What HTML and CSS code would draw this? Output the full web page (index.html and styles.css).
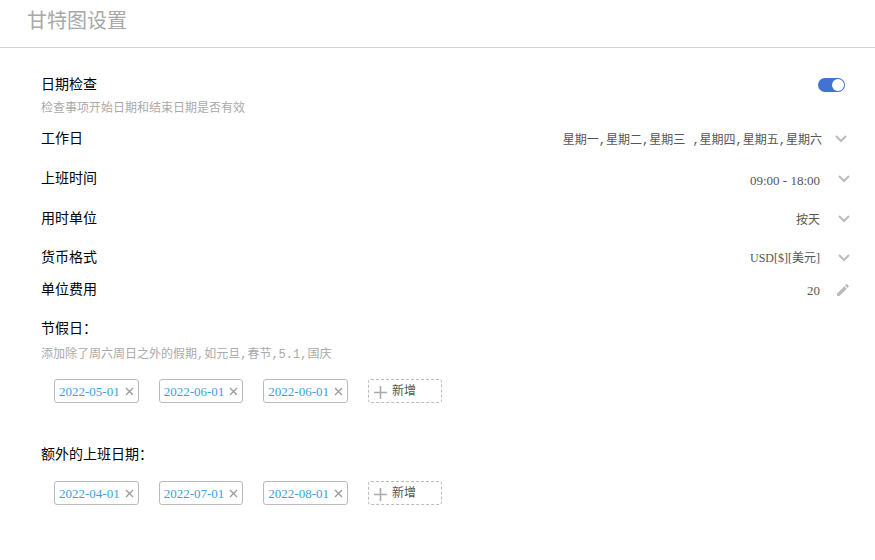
FILE: index.html
```html
<!DOCTYPE html>
<html lang="zh-CN">
<head>
    <meta charset="UTF-8">
    <title>甘特图设置</title>
    <link rel="stylesheet" href="styles.css">
</head>
<body>
<svg class="sprite" width="0" height="0">
    <symbol id="arrow" viewBox="0 0 12 8"><path d="M1 1l5 5 5-5" fill="none" stroke="#bbb" stroke-width="2"/></symbol>
    <symbol id="close" viewBox="0 0 9 9"><path d="M1 1l7 7M8 1l-7 7" fill="none" stroke="#999" stroke-width="1.3"/></symbol>
    <symbol id="plus" viewBox="0 0 13 13"><path d="M6.5 0v13M0 6.5h13" fill="none" stroke="#aaa" stroke-width="1.6"/></symbol>
    <symbol id="pen" viewBox="0 0 12 12"><path d="M0 12V9.5L7.3 2.2l2.5 2.5L2.5 12zM8 1.5L9.2.3q.4-.4.8 0l1.7 1.7q.4.4 0 .8L10.5 4z" fill="#bbb"/></symbol>
</svg>
<header class="header">
    <h1>甘特图设置</h1>
</header>
<main class="settings">
    <div class="row check">
        <label for="dateCheck">日期检查</label>
        <input class="switch" type="checkbox" id="dateCheck" checked>
    </div>
    <p class="hint">检查事项开始日期和结束日期是否有效</p>
    <div class="row">
        <label for="workday">工作日</label>
        <div class="pick days">
            <select id="workday"><option>星期一,星期二,星期三 ,星期四,星期五,星期六</option></select>
            <svg class="arrow"><use href="#arrow"/></svg>
        </div>
    </div>
    <div class="row">
        <label for="worktime">上班时间</label>
        <div class="pick">
            <select id="worktime" class="num"><option>09:00 - 18:00</option></select>
            <svg class="arrow"><use href="#arrow"/></svg>
        </div>
    </div>
    <div class="row">
        <label for="unit">用时单位</label>
        <div class="pick">
            <select id="unit"><option>按天</option></select>
            <svg class="arrow"><use href="#arrow"/></svg>
        </div>
    </div>
    <div class="row currency">
        <label for="currency">货币格式</label>
        <div class="pick">
            <select id="currency" class="money"><option>USD[$][美元]</option></select>
            <svg class="arrow"><use href="#arrow"/></svg>
        </div>
    </div>
    <div class="row cost">
        <label for="cost">单位费用</label>
        <div class="edit">
            <input id="cost" class="num" type="text" value="20">
            <button type="button" aria-label="编辑"><svg class="pen"><use href="#pen"/></svg></button>
        </div>
    </div>
    <section class="holiday">
        <h2>节假日：</h2>
        <p class="hint">添加除了周六周日之外的假期,如元旦,春节,5.1,国庆</p>
        <div class="dates">
            <span class="date num">2022-05-01<button type="button" aria-label="删除"><svg class="close"><use href="#close"/></svg></button></span>
            <span class="date num">2022-06-01<button type="button" aria-label="删除"><svg class="close"><use href="#close"/></svg></button></span>
            <span class="date num">2022-06-01<button type="button" aria-label="删除"><svg class="close"><use href="#close"/></svg></button></span>
            <button type="button" class="add"><svg class="plus"><use href="#plus"/></svg>新增</button>
        </div>
    </section>
    <section class="extra">
        <h2>额外的上班日期：</h2>
        <div class="dates">
            <span class="date num">2022-04-01<button type="button" aria-label="删除"><svg class="close"><use href="#close"/></svg></button></span>
            <span class="date num">2022-07-01<button type="button" aria-label="删除"><svg class="close"><use href="#close"/></svg></button></span>
            <span class="date num">2022-08-01<button type="button" aria-label="删除"><svg class="close"><use href="#close"/></svg></button></span>
            <button type="button" class="add"><svg class="plus"><use href="#plus"/></svg>新增</button>
        </div>
    </section>
</main>
</body>
</html>
```
FILE: styles.css
```css
* {
    box-sizing: border-box;
}
body {
    margin: 0;
    background: #fff;
    color: #000;
    font-family: "Liberation Mono", "Noto Sans CJK SC", monospace;
    font-size: 14px;
    line-height: 20px;
}
h1, h2, p {
    margin: 0;
    font-weight: 400;
}
svg {
    display: block;
}
.sprite {
    position: absolute;
}
button, select, input {
    margin: 0;
    padding: 0;
    border: 0;
    background: none;
    color: #555;
    font-family: inherit;
    font-size: 12px;
    line-height: 20px;
}
button, select {
    cursor: pointer;
}
.header {
    padding: 8px 27px 9px;
    border-bottom: 1px solid #d4d4d4;
}
.header h1 {
    color: #a8a8a8;
    font-size: 20px;
    line-height: 30px;
}
.settings {
    padding: 27px 25px 40px 41px;
}
.row {
    display: flex;
    justify-content: space-between;
    align-items: center;
    padding: 8px 0;
}
.check {
    padding: 0 5px 0 0;
}
.currency {
    padding: 7px 0;
}
.cost {
    padding: 1px 0;
}
.hint {
    padding-top: 4px;
    color: #aaa;
    font-size: 12px;
    line-height: 20px;
}
.switch {
    appearance: none;
    width: 27px;
    height: 14px;
    padding: 1px;
    border-radius: 7px;
    background: #4272d2;
    cursor: pointer;
}
.switch::before {
    content: "";
    display: block;
    width: 12px;
    height: 12px;
    border-radius: 50%;
    background: #fff;
}
.switch:checked::before {
    margin-left: auto;
}
/* the arrow shares the select's cell so the whole area opens the list */
.pick {
    display: grid;
    align-items: center;
    justify-items: end;
}
.pick select, .pick svg {
    grid-area: 1 / 1;
}
.pick select {
    appearance: none;
    height: 24px;
    padding: 4px 30px 0 0;
    text-align-last: right;
}
.days {
    padding-right: 3px;
}
.pick.days select {
    padding-right: 25px;
}
.arrow {
    width: 12px;
    height: 8px;
    pointer-events: none;
}
.num, .pick .num, .pick .money {
    font-family: "Liberation Serif", "Noto Sans CJK SC", serif;
}
.num, .pick .num {
    font-size: 13px;
}
.pick .money {
    padding-top: 0;
}
.edit {
    display: flex;
    align-items: center;
    gap: 17px;
}
.edit input {
    width: 60px;
    height: 24px;
    padding-top: 2px;
    text-align: right;
}
.pen {
    width: 12px;
    height: 12px;
}
.edit button {
    padding-right: 1px;
}
h2 {
    font-size: 14px;
    line-height: 24px;
}
.holiday {
    margin-top: 14px;
}
.extra {
    margin-top: 40px;
}
.dates {
    display: flex;
    flex-wrap: wrap;
    gap: 20px;
    margin-top: 14px;
    padding-left: 13px;
}
.date {
    display: flex;
    align-items: center;
    gap: 5px;
    height: 24px;
    padding: 1px 4px 0;
    border: 1px solid #bbb;
    border-radius: 3px;
    color: #3ba1e0;
}
.close {
    width: 9px;
    height: 9px;
}
.add {
    display: flex;
    align-items: center;
    gap: 5px;
    width: 74px;
    height: 24px;
    padding: 2px 0 0 5px;
    border: 1px dashed #bbb;
    border-radius: 3px;
}
.plus {
    width: 13px;
    height: 13px;
}
```
